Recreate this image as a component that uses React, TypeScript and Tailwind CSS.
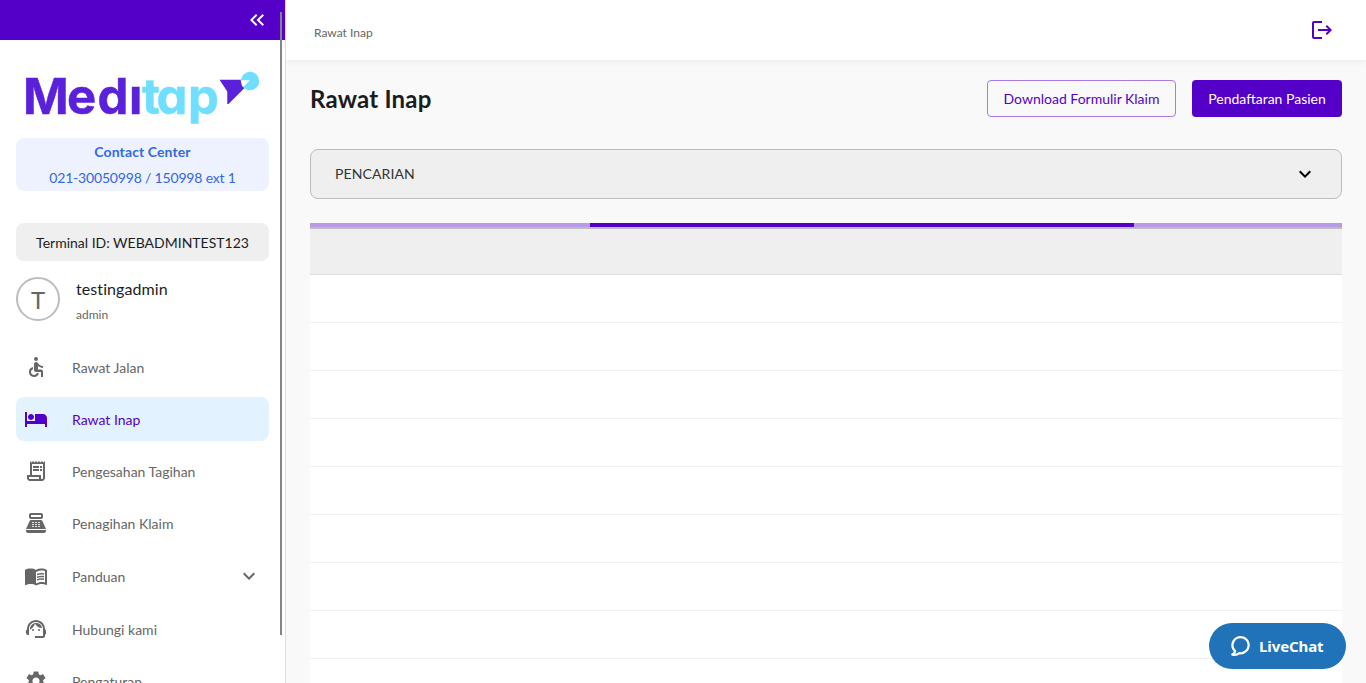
import type { ReactNode } from "react";
import {
  MdAccessible,
  MdExpandMore,
  MdHotel,
  MdKeyboardDoubleArrowLeft,
  MdLogout,
  MdMenuBook,
  MdOutlineReceiptLong,
  MdPointOfSale,
  MdSettings,
  MdSupportAgent,
} from "react-icons/md";

function Logo() {
  return (
    <svg width="235" height="68" viewBox="0 0 235 68" className="block overflow-visible">
      <g
        fontFamily="Inter, sans-serif"
        fontWeight="700"
        fontSize="49"
        strokeWidth="0.5"
        className="[font-feature-settings:'cv11']"
      >
        <text x="-3 41 71.500 103" y="44" fill="#5b20d9" stroke="#5b20d9">
          Medı
        </text>
        <text x="116 130.500 162" y="44" fill="#70dfff" stroke="#70dfff">
          tap
        </text>
      </g>
      <path d="M193.500 9.800H215.500L218.500 18 202.500 34H201.300V21.500z" fill="#5b20d9" />
      <circle cx="224" cy="11" r="9.200" fill="#70dfff" />
      <path d="M214.600 10.200L224 10.200 217 17.200z" fill="#fff" />
    </svg>
  );
}

interface NavItemProps {
  icon: ReactNode;
  label: string;
  active?: boolean;
  expandable?: boolean;
}

function NavItem({ icon, label, active, expandable }: NavItemProps) {
  return (
    <a
      className={
        active
          ? "flex h-11 shrink-0 items-center rounded-lg bg-[#e3f2ff] px-2 text-[#5500c8]"
          : expandable
            ? "flex h-[46px] shrink-0 items-center rounded-lg px-2 text-[#666666]"
            : "flex h-11 shrink-0 items-center rounded-lg px-2 text-[#666666]"
      }
    >
      {icon}
      <span className="ml-6 flex-1 pt-0.5 text-sm leading-5">{label}</span>
      {expandable && <MdExpandMore size={24} />}
    </a>
  );
}

function Sidebar() {
  return (
    <aside className="relative flex h-full w-[286px] shrink-0 flex-col overflow-hidden border-r border-[#dedede] bg-white">
      <div className="flex h-10 shrink-0 items-center justify-end bg-[#5500c8] pr-4 text-white">
        <MdKeyboardDoubleArrowLeft size={24} />
      </div>
      <div className="flex flex-col px-4">
        <div className="mt-[30px] ml-[10px] h-[68px]">
          <Logo />
        </div>
        <div className="flex h-[53px] flex-col items-center rounded-lg bg-[#eef2fe] text-sm text-[#3368e0]">
          <span className="h-[26px] pt-1 leading-5 font-bold tracking-[0.1px]">Contact Center</span>
          <span className="pt-1 leading-5 tracking-[-0.18px]">021-30050998 / 150998 ext 1</span>
        </div>
        <div className="mt-8 flex h-[38px] items-center justify-center rounded-lg bg-[#efefef] pt-0.5 text-sm text-[#1c1c1c]">
          Terminal ID: WEBADMINTEST123
        </div>
        <div className="mt-4 flex gap-4">
          <div className="flex size-11 items-center justify-center rounded-full border-2 border-[#bdbdbd] pt-0.5 text-2xl text-[#666666]">
            T
          </div>
          <div className="flex flex-col">
            <span className="text-base leading-6 tracking-[0.08px] text-[#1c1c1c]">testingadmin</span>
            <span className="mt-1 text-xs leading-5 text-[#666666]">admin</span>
          </div>
        </div>
        <nav className="mt-5 flex flex-col gap-2">
          <NavItem icon={<MdAccessible size={24} />} label="Rawat Jalan" />
          <NavItem icon={<MdHotel size={24} />} label="Rawat Inap" active />
          <NavItem icon={<MdOutlineReceiptLong size={24} />} label="Pengesahan Tagihan" />
          <NavItem icon={<MdPointOfSale size={24} />} label="Penagihan Klaim" />
          <NavItem icon={<MdMenuBook size={24} />} label="Panduan" expandable />
          <NavItem icon={<MdSupportAgent size={24} />} label="Hubungi kami" />
          <NavItem icon={<MdSettings size={24} />} label="Pengaturan" />
        </nav>
      </div>
      <div className="absolute top-3 left-[280px] h-[623px] w-0.5 bg-[#858585]" />
    </aside>
  );
}

function ChatButton() {
  return (
    <button className="absolute right-5 bottom-[14px] flex h-[46px] w-[137px] items-center rounded-full bg-[#2073b9] pl-[22px] text-white">
      <svg width="20" height="22" viewBox="0 0 20 22" fill="none" stroke="currentColor" strokeWidth="2.200" strokeLinejoin="round">
        <path d="M4.200 16.300A8.100 8.100 0 1 1 8.300 18.200C6.200 19.900 3.800 20.200 1.300 19.600c1.600-.8 2.500-1.900 2.900-3.300z" />
      </svg>
      <span className="ml-2 font-['Noto_Sans',sans-serif] text-[15px] leading-5 font-bold tracking-[-0.1px]">
        LiveChat
      </span>
    </button>
  );
}

const rows = [0, 1, 2, 3, 4, 5, 6, 7, 8];

export default function App() {
  return (
    <div className="relative flex h-[683px] w-full overflow-hidden bg-[#f9f9f9] font-[Lato,sans-serif]">
      <Sidebar />
      <div className="flex min-w-0 flex-1 flex-col">
        <header className="flex h-[60px] shrink-0 items-center justify-between bg-white pr-8 pl-7 shadow-[0_2px_6px_rgba(0,0,0,0.06)]">
          <span className="pt-1.5 text-xs leading-4 text-[#666666]">Rawat Inap</span>
          <MdLogout size={24} className="text-[#5500c8]" />
        </header>
        <main className="flex flex-1 flex-col px-6 pt-5">
          <div className="flex h-[37px] items-center justify-between">
            <h1 className="text-2xl leading-8 font-bold tracking-[0.2px] text-[#1c1c1c]">Rawat Inap</h1>
            <div className="flex gap-4">
              <button className="h-[37px] w-[189px] rounded border border-[#a97ae2] text-sm text-[#5500c8]">
                Download Formulir Klaim
              </button>
              <button className="h-[37px] w-[150px] rounded bg-[#5500c8] text-sm text-white">
                Pendaftaran Pasien
              </button>
            </div>
          </div>
          <div className="mt-8 flex h-[50px] shrink-0 items-center justify-between rounded-lg border border-[#bdbdbd] bg-[#efefef] px-6 text-sm text-[#333333]">
            <span className="tracking-[0.1px]">PENCARIAN</span>
            <MdExpandMore size={24} className="text-black" />
          </div>
          <section className="mt-6 bg-white">
            <div className="flex h-1 bg-[#bb99e9]">
              <div className="ml-[280px] h-full w-[544px] bg-[#5500c8]" />
            </div>
            <div className="h-12 border-t-2 border-b border-t-[#bdbdbd] border-b-[#dedede] bg-[#efefef]" />
            {rows.map((row) => (
              <div key={row} className="h-12 border-b border-[#efefef]" />
            ))}
          </section>
        </main>
      </div>
      <ChatButton />
    </div>
  );
}
